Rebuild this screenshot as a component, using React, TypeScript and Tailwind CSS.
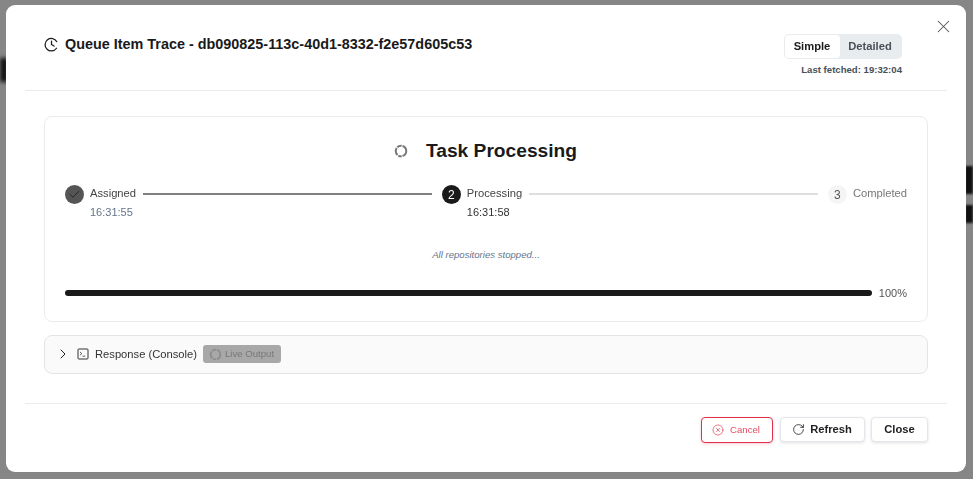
import { Check, ChevronRight, RotateCw, X, XCircle } from "lucide-react";

const font = { fontFamily: '"Liberation Sans", Arial, sans-serif' };

function ClockIcon() {
  return (
    <svg width="15" height="15" viewBox="0 0 24 24" fill="none" stroke="currentColor" strokeWidth="2" strokeLinecap="round" strokeLinejoin="round" className="text-[#1a1a1a]">
      <path d="M20.5 7.5A10 10 0 1 0 20 18" />
      <path d="M12 6.5V12l4 2.5" />
    </svg>
  );
}

function SpinRing({ size, className }: { size: number; className: string }) {
  return (
    <svg width={size} height={size} viewBox="0 0 24 24" fill="none" stroke="currentColor" strokeWidth="3.4" className={className}>
      <circle cx="12" cy="12" r="9" strokeDasharray="11 1.5 6 1.5 13 1.5 8 1.5 11 1.5" />
    </svg>
  );
}

function TerminalIcon() {
  return (
    <svg width="12" height="12" viewBox="0 0 12 12" fill="none" stroke="currentColor" strokeWidth="1" className="text-[#333]">
      <rect x="1" y="1" width="10" height="10" rx="0.8" />
      <path d="M3 4l1.8 1.6L3 7.2M5.5 8.2h2.6" strokeWidth="0.8" />
    </svg>
  );
}

function Step({ badge, label, time, state }: { badge: React.ReactNode; label: string; time?: string; state: "done" | "active" | "todo" }) {
  const circle =
    state === "done"
      ? "bg-[#555555] text-[#1a1a1a]"
      : state === "active"
        ? "bg-[#1a1a1a] text-white"
        : "bg-[#f5f5f5] text-[#555]";
  const labelColor = state === "todo" ? "text-[#777]" : "text-[#444]";
  return (
    <div className="flex items-start gap-[6px]">
      <div className={`flex h-[19px] w-[19px] shrink-0 items-center justify-center rounded-full text-[12px] ${circle}`}>{badge}</div>
      <div className="flex flex-col">
        <span className={`text-[11.2px] leading-[17px] ${labelColor}`}>{label}</span>
        {time && (
          <span className={`mt-[2px] text-[11px] leading-[17px] ${state === "done" ? "text-[#64748b]" : "text-[#333]"}`}>{time}</span>
        )}
      </div>
    </div>
  );
}

export default function App() {
  return (
    <div className="relative h-[479px] w-[973px] overflow-hidden bg-[#868686] pl-[6px] pt-[5px]" style={font}>
      <div className="absolute left-0 top-[58px] h-[24px] w-[8px] bg-[#111] blur-[2px]" />
      <div className="absolute right-0 top-[166px] h-[28px] w-[8px] bg-[#111] blur-[1px]" />
      <div className="absolute right-0 top-[205px] h-[18px] w-[8px] bg-[#111] blur-[1px]" />

      <div className="relative flex h-[467px] w-[960px] flex-col rounded-[9px] bg-white px-[19px]">
        <button className="absolute right-[12px] top-[11px] text-[#555]">
          <X size={21} strokeWidth={1.2} />
        </button>

        <header className="flex h-[86px] items-start justify-between border-b border-[#e9ecef] pl-[19px] pr-[45px] pt-[29px]">
          <div className="flex items-center gap-[6px] pt-[1px]">
            <ClockIcon />
            <h1 className="text-[14.4px] font-bold leading-[18px] text-[#1a1a1a]">
              Queue Item Trace - db090825-113c-40d1-8332-f2e57d605c53
            </h1>
          </div>
          <div className="flex flex-col items-end">
            <div className="flex h-[25px] w-[118px] rounded-[5px] bg-[#e9ecef] p-[1px] will-change-transform">
              <span className="flex w-[55px] items-center justify-center rounded-[4px] bg-white pr-[1px] text-[11.2px] font-bold text-[#1a1a1a]">Simple</span>
              <span className="flex flex-1 items-center justify-center pr-[1px] text-[11.2px] font-bold text-[#495057]">Detailed</span>
            </div>
            <span className="mt-[5px] text-[9.6px] font-bold leading-[12px] text-[#495057]">Last fetched: 19:32:04</span>
          </div>
        </header>

        <main className="flex flex-1 flex-col px-[19px] pt-[25px]">
          <section className="flex h-[206px] flex-col rounded-[8px] border border-[#e9ecef] px-[20px]">
            <div className="flex items-center justify-center gap-[18px] pr-[1px] pt-[22px]">
              <SpinRing size={14} className="text-[#777]" />
              <h2 className="text-[19.2px] font-bold leading-[24px] text-[#1a1a1a]">Task Processing</h2>
            </div>
            <div className="mt-[22px] flex items-start will-change-transform">
              <Step state="done" label="Assigned" time="16:31:55" badge={<Check size={13} strokeWidth={1.5} />} />
              <div className="ml-[7px] mr-[10px] mt-[8px] h-[2px] flex-1 bg-[#808080]" />
              <Step state="active" label="Processing" time="16:31:58" badge="2" />
              <div className="ml-[7px] mr-[10px] mt-[8px] h-[2px] flex-1 bg-[#dedede]" />
              <Step state="todo" label="Completed" badge="3" />
            </div>
            <p className="mt-[28px] text-center text-[9.6px] italic leading-[12px] text-[#64748b]">All repositories stopped...</p>
            <div className="mt-[25px] flex items-center gap-[7px] will-change-transform">
              <div className="h-[6px] flex-1 rounded-full bg-[#1a1a1a]" />
              <span className="text-[11px] leading-[14px] text-[#555]">100%</span>
            </div>
          </section>

          <section className="mt-[13px] flex h-[39px] items-center rounded-[8px] border border-[#e4e4e4] bg-[#fafafa] pb-[1px] pl-[10px] will-change-transform">
            <ChevronRight size={16} strokeWidth={1.5} className="text-[#222]" />
            <span className="ml-[6px]"><TerminalIcon /></span>
            <span className="ml-[6px] text-[11.2px] text-[#333]">Response (Console)</span>
            <span className="ml-[6px] flex h-[18px] items-center gap-[3px] rounded-[3px] bg-[#a8a8a8] px-[6px] text-[9.6px] text-[#787878]">
              <SpinRing size={13} className="text-[#8c8c8c]" />
              <span className="pr-[1px]">Live Output</span>
            </span>
          </section>
        </main>

        <footer className="flex h-[69px] items-start justify-end gap-[6px] border-t border-[#e9ecef] pr-[19px] pt-[13px] will-change-transform">
          <button className="mr-[1px] flex h-[26px] w-[72px] items-center justify-center gap-[6px] rounded-[4px] border border-[#e03048] bg-white pr-[2px] text-[9.6px] text-[#e84a60] shadow-[0_1px_3px_rgba(224,48,80,0.25)]">
            <XCircle size={12} strokeWidth={1.5} />
            Cancel
          </button>
          <button className="flex h-[25px] w-[85px] items-center justify-center gap-[5px] rounded-[4px] border border-[#e4e6eb] bg-white pl-[1px] pr-[2px] text-[11.2px] font-bold text-[#222] shadow-[0_1px_3px_rgba(0,0,0,0.12)]">
            <RotateCw size={13} strokeWidth={1.5} />
            Refresh
          </button>
          <button className="flex h-[25px] w-[57px] items-center justify-center rounded-[4px] border border-[#e4e6eb] bg-white text-[11.2px] font-bold text-[#222] shadow-[0_1px_3px_rgba(0,0,0,0.12)]">
            Close
          </button>
        </footer>
      </div>
    </div>
  );
}
